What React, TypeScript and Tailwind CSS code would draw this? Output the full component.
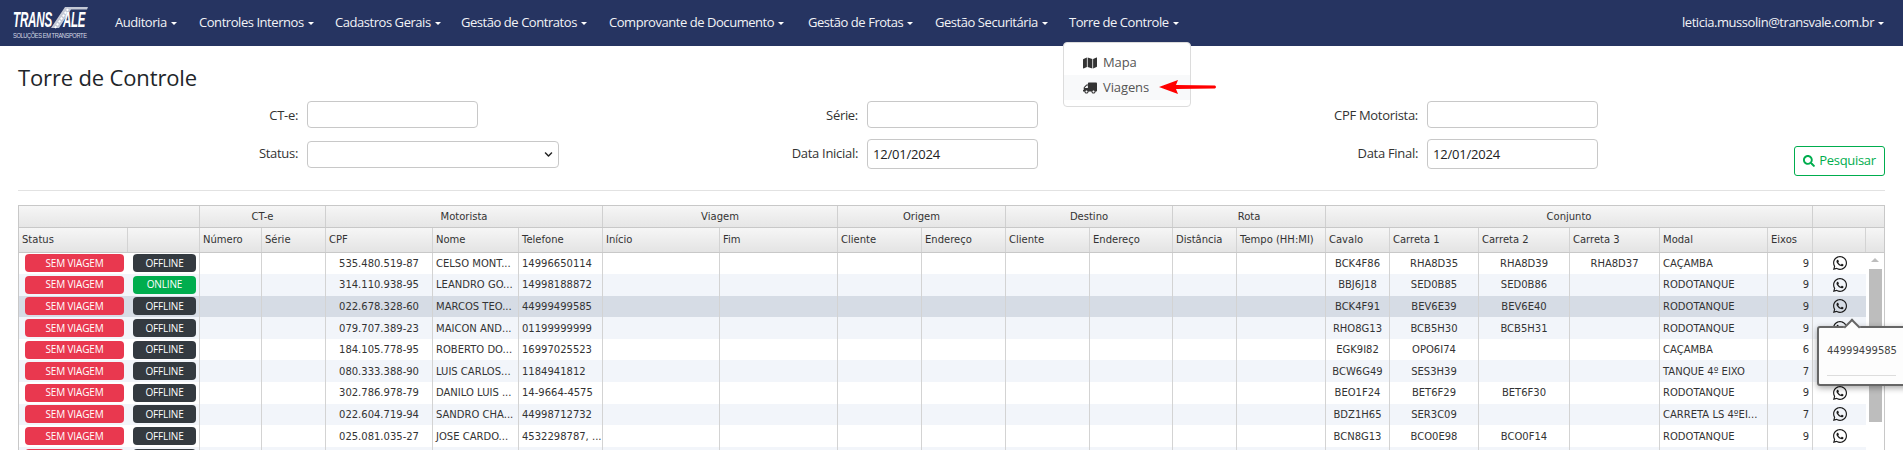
import { FaMap, FaTruck, FaWhatsapp, FaSearch, FaChevronDown } from "react-icons/fa";

const navItems = [
  { label: "Auditoria", cls: "w-[84px]" },
  { label: "Controles Internos", cls: "w-[136px]" },
  { label: "Cadastros Gerais", cls: "w-[126px]" },
  { label: "Gestão de Contratos", cls: "w-[148px]" },
  { label: "Comprovante de Documento", cls: "w-[199px]" },
  { label: "Gestão de Frotas", cls: "w-[127px]" },
  { label: "Gestão Securitária", cls: "w-[134px]" },
  { label: "Torre de Controle", cls: "w-[122px]" },
];

const groups = [
  { label: "", cls: "w-[181px]" },
  { label: "CT-e", cls: "w-[126px]" },
  { label: "Motorista", cls: "w-[277px]" },
  { label: "Viagem", cls: "w-[235px]" },
  { label: "Origem", cls: "w-[168px]" },
  { label: "Destino", cls: "w-[167px]" },
  { label: "Rota", cls: "w-[153px]" },
  { label: "Conjunto", cls: "w-[487px]" },
  { label: "", cls: "w-[71px]" },
];

const W = [
  "w-[109px]", "w-[72px]", "w-[62px]", "w-[64px]", "w-[107px]", "w-[86px]", "w-[84px]", "w-[117px]",
  "w-[118px]", "w-[84px]", "w-[84px]", "w-[84px]", "w-[83px]", "w-[64px]", "w-[89px]", "w-[64px]",
  "w-[89px]", "w-[91px]", "w-[90px]", "w-[108px]", "w-[45px]", "w-[53px]",
];

const heads = [
  "Status", "", "Número", "Série", "CPF", "Nome", "Telefone", "Início", "Fim", "Cliente", "Endereço",
  "Cliente", "Endereço", "Distância", "Tempo (HH:MI)", "Cavalo", "Carreta 1", "Carreta 2", "Carreta 3",
  "Modal", "Eixos", "", "",
];
const headWidths = [...W, "w-[18px]"];

type Row = {
  online?: boolean;
  cpf: string; nome: string; tel: string; cav: string; c1: string; c2: string; c3: string; modal: string; eixos: string;
};

const rows: Row[] = [
  { cpf: "535.480.519-87", nome: "CELSO MONT...", tel: "14996650114", cav: "BCK4F86", c1: "RHA8D35", c2: "RHA8D39", c3: "RHA8D37", modal: "CAÇAMBA", eixos: "9" },
  { online: true, cpf: "314.110.938-95", nome: "LEANDRO GO...", tel: "14998188872", cav: "BBJ6J18", c1: "SED0B85", c2: "SED0B86", c3: "", modal: "RODOTANQUE", eixos: "9" },
  { cpf: "022.678.328-60", nome: "MARCOS TEO...", tel: "44999499585", cav: "BCK4F91", c1: "BEV6E39", c2: "BEV6E40", c3: "", modal: "RODOTANQUE", eixos: "9" },
  { cpf: "079.707.389-23", nome: "MAICON AND...", tel: "01199999999", cav: "RHO8G13", c1: "BCB5H30", c2: "BCB5H31", c3: "", modal: "RODOTANQUE", eixos: "9" },
  { cpf: "184.105.778-95", nome: "ROBERTO DO...", tel: "16997025523", cav: "EGK9I82", c1: "OPO6I74", c2: "", c3: "", modal: "CAÇAMBA", eixos: "6" },
  { cpf: "080.333.388-90", nome: "LUIS CARLOS...", tel: "1184941812", cav: "BCW6G49", c1: "SES3H39", c2: "", c3: "", modal: "TANQUE 4º EIXO", eixos: "7" },
  { cpf: "302.786.978-79", nome: "DANILO LUIS ...", tel: "14-9664-4575", cav: "BEO1F24", c1: "BET6F29", c2: "BET6F30", c3: "", modal: "RODOTANQUE", eixos: "9" },
  { cpf: "022.604.719-94", nome: "SANDRO CHA...", tel: "44998712732", cav: "BDZ1H65", c1: "SER3C09", c2: "", c3: "", modal: "CARRETA LS 4ºEI...", eixos: "7" },
  { cpf: "025.081.035-27", nome: "JOSE CARDO...", tel: "4532298787, ...", cav: "BCN8G13", c1: "BCO0E98", c2: "BCO0F14", c3: "", modal: "RODOTANQUE", eixos: "9" },
  { cpf: "", nome: "", tel: "", cav: "", c1: "", c2: "", c3: "", modal: "", eixos: "" },
];

const sans = "font-['Open_Sans',sans-serif]";

function Logo() {
  return (
    <svg width="76" height="34" viewBox="0 0 76 34" className="block shrink-0">
      <path d="M38 22 L52 1 L75 1 L74 3.5 L58 3.5 L46 22 Z" fill="#c4c9d6" />
      <path d="M42 22 L55 3" stroke="#fff" strokeWidth="2" strokeDasharray="2 1.5" />
      <text transform="translate(0 21) scale(0.53 1)" fill="#fff" fontFamily="Liberation Sans" fontWeight="700" fontStyle="italic" fontSize="22">TRANS</text>
      <text transform="translate(50 21) scale(0.52 1)" fill="#fff" fontFamily="Liberation Sans" fontWeight="700" fontStyle="italic" fontSize="22">ALE</text>
      <text transform="translate(0 32) scale(0.88 1)" fill="#d5d9e4" fontFamily="Liberation Sans" fontSize="6.5">SOLUÇÕES EM TRANSPORTE</text>
    </svg>
  );
}

function Caret() {
  return <span className="ml-[4px] inline-block h-0 w-0 border-x-[3px] border-t-[3px] border-x-transparent border-t-white align-middle" />;
}

function Cell({ w, align, children, line = true }: { w: string; align?: string; children?: React.ReactNode; line?: boolean }) {
  return (
    <div className={`${w} ${align ?? ""} flex h-full shrink-0 items-center overflow-hidden whitespace-nowrap px-[3px] ${line ? "border-r border-[#d3d3d3]" : ""}`}>
      {children}
    </div>
  );
}

const inputCls = "h-[27px] w-[171px] rounded-[4px] border border-[#c8c8c8] bg-white";
const dateCls = "h-[30px] w-[171px] rounded-[4px] border border-[#c8c8c8] bg-white px-[5px] text-[13px] leading-[28px] tracking-[-0.2px] text-[#222]";
const labelCls = "flex h-[30px] items-center justify-end pr-[9px] text-[13px] tracking-[-0.3px] text-[#333]";

export default function App() {
  return (
    <div className={`relative h-[450px] w-[1903px] overflow-hidden bg-white ${sans}`}>
      <nav className="flex h-[46px] items-center bg-[#263461] pl-[13px] pr-[19px] text-[13px] tracking-[-0.45px] text-[#f2f3f6]">
        <Logo />
        <div className="ml-[26px] flex items-center">
          {navItems.map((n) => (
            <div key={n.label} className={`${n.cls} whitespace-nowrap`}>
              {n.label}
              <Caret />
            </div>
          ))}
        </div>
        <div className="ml-auto whitespace-nowrap">
          leticia.mussolin@transvale.com.br
          <Caret />
        </div>
      </nav>

      <main className="px-[18px]">
        <h1 className="mt-[14px] h-[41px] text-[22px] leading-[34px] tracking-[-0.15px] text-[#212529]">Torre de Controle</h1>

        <div className="grid grid-cols-[289px_252px_308px_170px_390px_171px_287px] grid-rows-[27px_37px] gap-y-[11px]">
          <div className={labelCls}>CT-e:</div>
          <div className={inputCls} />
          <div className={labelCls}>Série:</div>
          <div className={inputCls} />
          <div className={labelCls}>CPF Motorista:</div>
          <div className={inputCls} />
          <div />

          <div className={labelCls}>Status:</div>
          <div className="mt-[2px] flex h-[27px] w-[252px] items-center justify-end rounded-[4px] border border-[#c8c8c8] bg-white pr-[5px] text-[#222]">
            <FaChevronDown className="text-[9px]" />
          </div>
          <div className={labelCls}>Data Inicial:</div>
          <div className={dateCls}>12/01/2024</div>
          <div className={labelCls}>Data Final:</div>
          <div className={dateCls}>12/01/2024</div>
          <div className="flex items-end justify-end">
            <button className="flex h-[30px] w-[91px] items-center justify-center gap-[4px] rounded-[3px] border border-[#00ad4e] bg-white text-[13px] tracking-[-0.3px] text-[#00ad4e]">
              <FaSearch className="text-[12px]" />
              Pesquisar
            </button>
          </div>
        </div>

        <hr className="mt-[14px] border-t border-[#e2e2e2]" />

        <section className="mt-[14px] w-[1867px] border-x border-t border-[#c8c8c8] font-['DejaVu_Sans',sans-serif] text-[10px] text-[#333]">
          <div className="flex h-[22px] border-b border-[#c8c8c8] bg-gradient-to-b from-[#f6f6f6] to-[#e6e6e6]">
            {groups.map((g, i) => (
              <div key={i} className={`${g.cls} flex shrink-0 items-center justify-center border-r border-[#d0d0d0] last:border-r-0`}>
                {g.label}
              </div>
            ))}
          </div>
          <div className="flex h-[24.5px] border-b border-[#c8c8c8] bg-gradient-to-b from-[#f6f6f6] to-[#e4e4e4]">
            {heads.map((h, i) => (
              <Cell key={i} w={headWidths[i]} line={i < heads.length - 1}>{h}</Cell>
            ))}
          </div>
          <div className="flex">
            <div className="w-[1847px]">
              {rows.map((r, i) => (
                <div
                  key={i}
                  className={`flex h-[21.6px] ${i === 2 ? "bg-[#d6dce5]" : i % 2 === 1 ? "bg-[#f2f5fa]" : "bg-white"}`}
                >
                  <div className={`${W[0]} flex h-full shrink-0 items-center pl-[6px]`}>
                    <span className={`${sans} flex h-[18px] w-[99px] items-center justify-center rounded-[4px] bg-[#e9384f] text-[10px] tracking-[-0.15px] text-white`}>
                      SEM VIAGEM
                    </span>
                  </div>
                  <div className={`${W[1]} flex h-full shrink-0 items-center border-r border-[#d3d3d3] pl-[5px]`}>
                    <span className={`${sans} flex h-[18px] w-[63px] items-center justify-center rounded-[4px] text-[10px] tracking-[-0.15px] text-white ${r.online ? "bg-[#00ad4e]" : "bg-[#343a40]"}`}>
                      {r.online ? "ONLINE" : "OFFLINE"}
                    </span>
                  </div>
                  <Cell w={W[2]} />
                  <Cell w={W[3]} />
                  <Cell w={W[4]} align="justify-center">{r.cpf}</Cell>
                  <Cell w={W[5]}>{r.nome}</Cell>
                  <Cell w={W[6]}>{r.tel}</Cell>
                  <Cell w={W[7]} />
                  <Cell w={W[8]} />
                  <Cell w={W[9]} />
                  <Cell w={W[10]} />
                  <Cell w={W[11]} />
                  <Cell w={W[12]} />
                  <Cell w={W[13]} />
                  <Cell w={W[14]} />
                  <Cell w={W[15]} align="justify-center">{r.cav}</Cell>
                  <Cell w={W[16]} align="justify-center">{r.c1}</Cell>
                  <Cell w={W[17]} align="justify-center">{r.c2}</Cell>
                  <Cell w={W[18]} align="justify-center">{r.c3}</Cell>
                  <Cell w={W[19]}>{r.modal}</Cell>
                  <Cell w={W[20]} align="justify-end">{r.eixos}</Cell>
                  <Cell w={W[21]} align="justify-center" line={false}>
                    <FaWhatsapp className="text-[16px] text-[#1a1a1a]" />
                  </Cell>
                </div>
              ))}
            </div>
            <div className="flex w-[18px] flex-col items-center pt-[5px]">
              <div className="h-0 w-0 border-x-[4px] border-b-[4px] border-x-transparent border-b-[#bdbdbd]" />
              <div className="mt-[7px] h-[153px] w-[13px] bg-[#bdbdbd]" />
            </div>
          </div>
        </section>
      </main>

      {/* open dropdown */}
      <div className="absolute left-[1063px] top-[42px] h-[65px] w-[128px] rounded-[4px] border border-[#dcdcdc] bg-white text-[13px] tracking-[-0.1px] text-[#555]">
        <div className="mt-[7px] flex h-[25px] items-center pl-[19px]">
          <FaMap className="mr-[6px] text-[14px] text-[#333]" />
          Mapa
        </div>
        <div className="flex h-[25px] items-center bg-[#f8f9fa] pl-[19px]">
          <FaTruck className="mr-[6px] -scale-x-100 text-[14px] text-[#333]" />
          Viagens
        </div>
      </div>
      <svg width="58" height="14" viewBox="0 0 58 14" className="absolute left-[1159px] top-[80px]">
        <path d="M0 7 L19 0 L17 5 L56 5.5 Q58 7 56 8.5 L17 9 L19 14 Z" fill="#f00" />
      </svg>

      {/* phone popover */}
      <div className="absolute left-[1817px] top-[326px] h-[60px] w-[96px] rounded-[3px] border-2 border-[#666] bg-[#fdfdfd] shadow-[0_2px_6px_rgba(0,0,0,0.35)]">
        <div className="absolute -top-[7px] left-[27px] h-[12px] w-[12px] rotate-45 border-l-2 border-t-2 border-[#666] bg-[#fdfdfd]" />
        <div className="relative pl-[8px] pt-[15px] font-['DejaVu_Sans',sans-serif] text-[10px] leading-[16px] text-[#444]">44999499585</div>
        <div className="ml-[8px] mt-[16px] w-[69px] border-t border-[#ddd]" />
      </div>
    </div>
  );
}
